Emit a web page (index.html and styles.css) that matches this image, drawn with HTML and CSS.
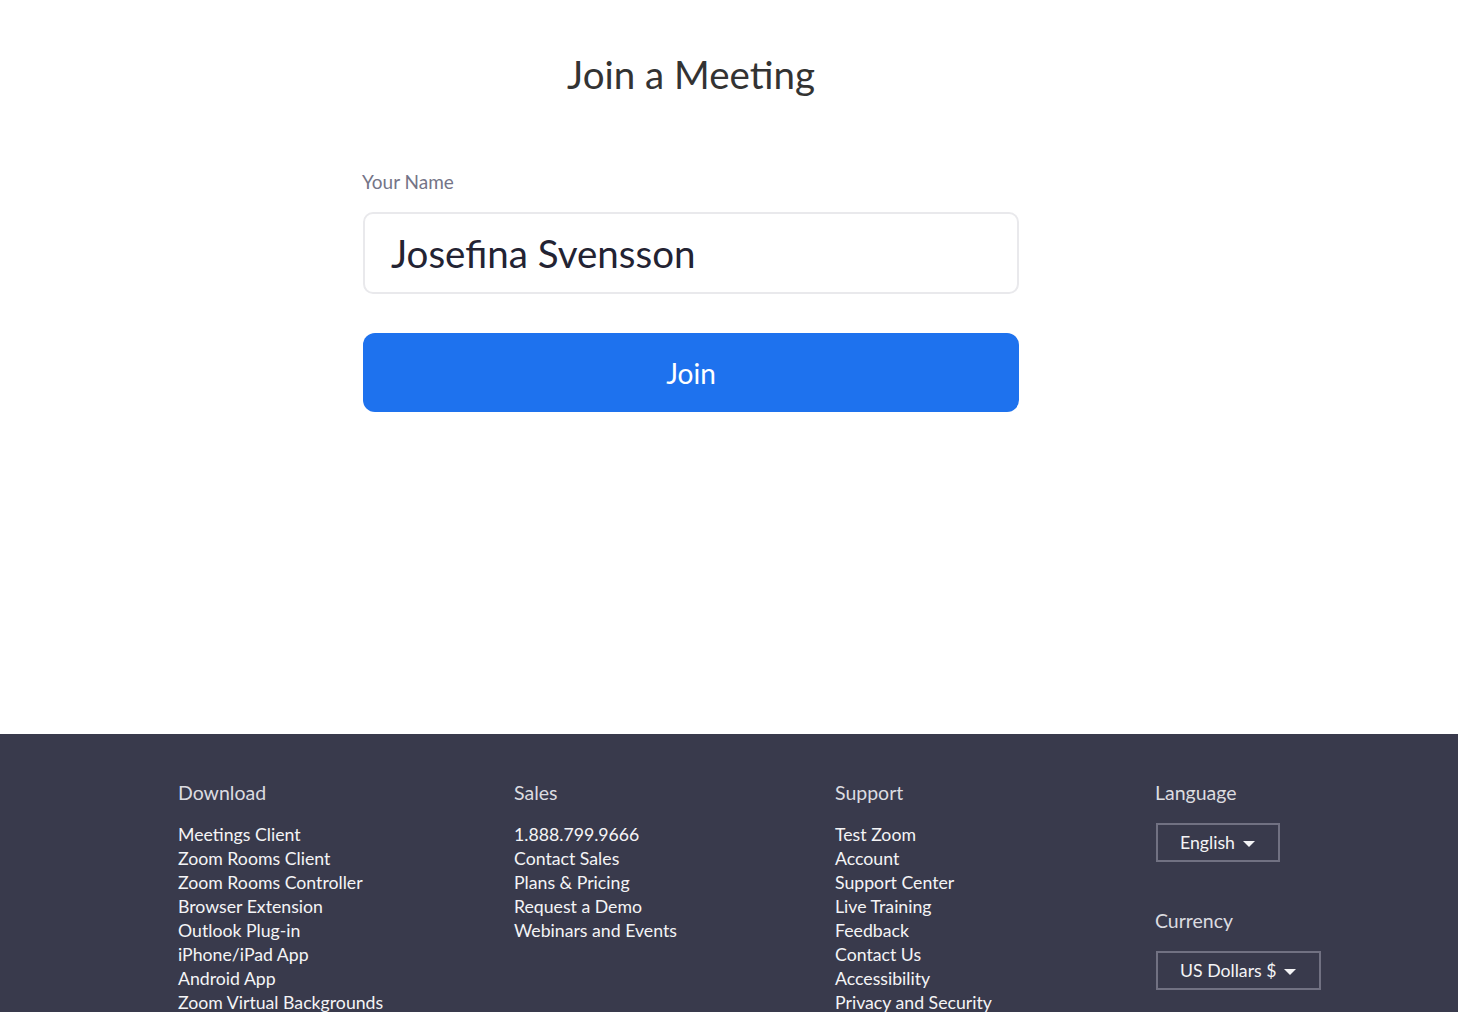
FILE: index.html
```html
<!DOCTYPE html>
<html lang="en">
<head>
    <meta charset="UTF-8">
    <meta name="viewport" content="width=device-width, initial-scale=1.0">
    <title>Join a Meeting</title>
    <link rel="stylesheet" href="styles.css">
</head>
<body>
    <main class="main">
        <div class="join-form">
            <h1 class="title">Join a Meeting</h1>
            <label class="field-label" for="name">Your Name</label>
            <input class="name-input" id="name" type="text" value="Josefina Svensson">
            <button class="join-btn">Join</button>
        </div>
    </main>

    <footer class="footer">
        <div class="footer-inner">
            <div class="col">
                <h3>Download</h3>
                <ul>
                    <li><a href="#">Meetings Client</a></li>
                    <li><a href="#">Zoom Rooms Client</a></li>
                    <li><a href="#">Zoom Rooms Controller</a></li>
                    <li><a href="#">Browser Extension</a></li>
                    <li><a href="#">Outlook Plug-in</a></li>
                    <li><a href="#">iPhone/iPad App</a></li>
                    <li><a href="#">Android App</a></li>
                    <li><a href="#">Zoom Virtual Backgrounds</a></li>
                </ul>
            </div>
            <div class="col">
                <h3>Sales</h3>
                <ul>
                    <li><a href="#">1.888.799.9666</a></li>
                    <li><a href="#">Contact Sales</a></li>
                    <li><a href="#">Plans &amp; Pricing</a></li>
                    <li><a href="#">Request a Demo</a></li>
                    <li><a href="#">Webinars and Events</a></li>
                </ul>
            </div>
            <div class="col">
                <h3>Support</h3>
                <ul>
                    <li><a href="#">Test Zoom</a></li>
                    <li><a href="#">Account</a></li>
                    <li><a href="#">Support Center</a></li>
                    <li><a href="#">Live Training</a></li>
                    <li><a href="#">Feedback</a></li>
                    <li><a href="#">Contact Us</a></li>
                    <li><a href="#">Accessibility</a></li>
                    <li><a href="#">Privacy and Security</a></li>
                </ul>
            </div>
            <div class="col col-settings">
                <h3>Language</h3>
                <button class="dropdown">English <span class="caret"></span></button>
                <h3 class="currency-title">Currency</h3>
                <button class="dropdown">US Dollars $ <span class="caret"></span></button>
            </div>
        </div>
    </footer>
</body>
</html>
```

FILE: styles.css
```css
* {
    margin: 0;
    padding: 0;
    box-sizing: border-box;
    font-family: Lato, 'Open Sans', sans-serif;
}

body {
    background: #fff;
}

.main {
    height: 734px;
    padding-right: 76px;
    padding-top: 50px;
}

.join-form {
    width: 656px;
    margin: 0 auto;
    display: flex;
    flex-direction: column;
}

.title {
    text-align: center;
    font-size: 38.5px;
    font-weight: 400;
    color: #333;
    line-height: 48px;
    margin-bottom: 72px;
}

.field-label {
    font-size: 19px;
    color: #747487;
    line-height: 24px;
    margin-left: -1px;
    margin-bottom: 18px;
}

.name-input {
    height: 82px;
    border: 2px solid #e9e9ec;
    border-radius: 10px;
    padding: 0 26px;
    font-size: 38.5px;
    color: #232333;
    outline: none;
    margin-bottom: 39px;
}

.join-btn {
    height: 79px;
    border: none;
    border-radius: 12px;
    background: #1e72ee;
    color: #fff;
    font-size: 28px;
    cursor: pointer;
}

.footer {
    background: #393a4c;
    padding-top: 44px;
    min-height: 278px;
}

.footer-inner {
    width: 1102px;
    margin: 0 auto;
    display: grid;
    grid-template-columns: 336px 321px 320px auto;
}

.footer h3 {
    font-size: 19.5px;
    font-weight: 400;
    color: #dcdce0;
    line-height: 30px;
    margin-bottom: 15px;
}

.footer ul {
    list-style: none;
}

.footer li {
    font-size: 17.7px;
    line-height: 24px;
}

.footer a {
    color: #f4f4f6;
    text-decoration: none;
}

.col-settings {
    display: flex;
    flex-direction: column;
    align-items: flex-start;
}

.dropdown {
    display: inline-flex;
    align-items: center;
    gap: 8px;
    height: 39px;
    padding: 0 23px 0 22px;
    background: transparent;
    border: 2px solid #717182;
    color: #f4f4f6;
    font-size: 17.7px;
    white-space: nowrap;
    margin-left: 1px;
    cursor: pointer;
}

.caret {
    width: 0;
    height: 0;
    border-left: 6px solid transparent;
    border-right: 6px solid transparent;
    border-top: 6px solid #f4f4f6;
    margin-top: 2px;
}

.col .currency-title {
    margin-top: 44px;
}
```
